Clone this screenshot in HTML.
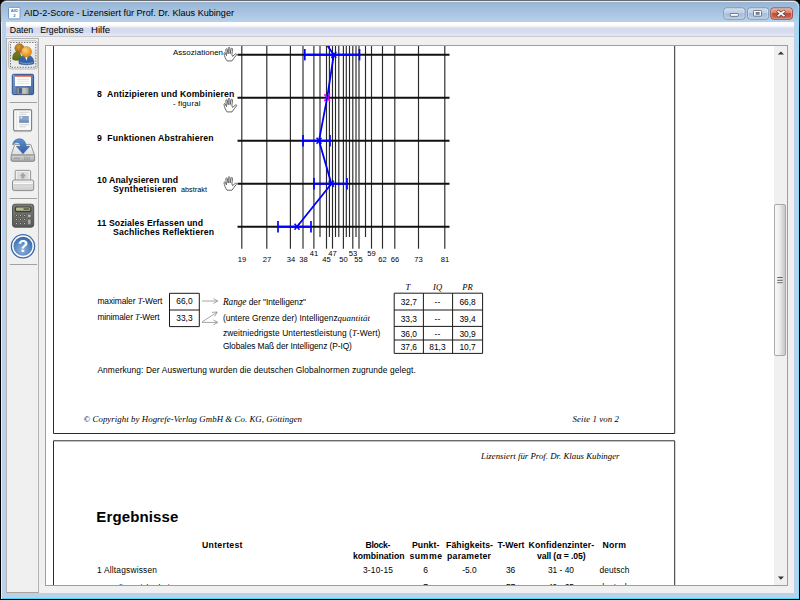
<!DOCTYPE html>
<html lang="de">
<head>
<meta charset="utf-8">
<title>AID-2-Score</title>
<style>
html,body{margin:0;padding:0;}
body{width:800px;height:600px;overflow:hidden;background:#000;position:relative;font-family:"Liberation Sans",sans-serif;}
.abs{position:absolute;}
#frame{left:1px;top:1px;width:798px;height:598px;background:#b9d1ea;border-radius:6px 6px 0 0;
  box-shadow:0 1px 0 0 #e4eefa inset, 1px 0 0 0 #e2eefa inset, 0 -1px 0 0 #4cd8f0 inset, -1px 0 0 0 #8fdcf8 inset;}
#frameglow{left:0;top:0;width:800px;height:600px;border-radius:7px 7px 0 0;background:linear-gradient(#6c6c6c,#202020 30px,#000 60px);}
#titlebar{left:1px;top:2px;width:797px;height:20px;border-radius:5px 5px 0 0;
  background:linear-gradient(#97b5d5,#a8c3e0 50%,#b6d1ea);}
#title{left:24px;top:5px;font-size:11.6px;color:#000;white-space:nowrap;letter-spacing:-0.1px;}
#client{left:6px;top:22px;width:788px;height:571px;background:#f0f0f0;}
#menubar{left:6px;top:22px;width:788px;height:15px;background:linear-gradient(#ffffff,#fdfdff 18%,#eef0f9 32%,#d6dbee 40%,#d6dbee 65%,#e4e8f6 92%,#c9c9cc 97%);}
.menu{top:24px;font-size:10.5px;color:#000;white-space:nowrap;}
#toolbar{left:6px;top:38px;width:33px;height:555px;border:1px solid #b4b4b4;border-bottom-color:#a8a29a;box-sizing:border-box;background:#f0f0f0;}
#view{left:45px;top:45px;width:743px;height:541px;border:1px solid #9a9ca8;box-sizing:border-box;background:#fff;overflow:hidden;}
#sbar{left:774px;top:46px;width:13px;height:539px;background:#f0f0f0;}
#thumb{left:774px;top:204px;width:12px;height:152px;border:1px solid #a8a8a8;border-radius:2px;box-sizing:border-box;
  background:linear-gradient(90deg,#f8f8f8,#f0f0f0 40%,#d0d0d4 85%,#c8c8cc);}
.wbtn{top:8px;height:11px;border:1px solid #6b84a4;border-radius:3px;box-sizing:border-box;
  background:linear-gradient(#c6d8ec,#b3cbe5 45%,#9dbbdc 50%,#b0cae6);box-shadow:0 0 0 1px rgba(255,255,255,.45) inset;}
#bclose{background:linear-gradient(#e3a698,#d4705c 45%,#c4432c 50%,#d0664e);border-color:#6a3a3a;}
</style>
</head>
<body>
<div class="abs" id="frameglow"></div>
<div class="abs" id="frame"></div>
<div class="abs" id="titlebar"></div>
<svg class="abs" style="left:0;top:0;z-index:5" width="800" height="40" font-family='"Liberation Sans",sans-serif'>
<text x="24" y="16.4" font-size="9.6" textLength="210" lengthAdjust="spacingAndGlyphs" fill="#000">AID-2-Score - Lizensiert für Prof. Dr. Klaus Kubinger</text>
<text x="9.8" y="32.6" font-size="9.4" textLength="23.4" lengthAdjust="spacingAndGlyphs">Daten</text>
<text x="40.2" y="32.6" font-size="9.4" textLength="43.4" lengthAdjust="spacingAndGlyphs">Ergebnisse</text>
<text x="91" y="32.6" font-size="9.4" textLength="19.2" lengthAdjust="spacingAndGlyphs">Hilfe</text>
</svg>
<div class="abs" id="client"></div>
<div class="abs" id="menubar"></div>
<div class="abs" id="toolbar"></div>
<div class="abs" id="view"></div>
<div class="abs" id="sbar"></div>
<div class="abs" id="thumb"></div>
<svg class="abs" id="doc" style="left:46px;top:46px" width="728" height="539" viewBox="46 46 728 539">
<style>.s{font-family:"Liberation Sans",sans-serif}.r{font-family:"Liberation Serif",serif}</style>
<path d="M53.5 46V433.5H674.7V46" fill="none" stroke="#2c2c2c" stroke-width="1"/>
<path d="M53.5 585V440.8H674.7V585" fill="none" stroke="#2c2c2c" stroke-width="1"/>
<line x1="241.8" y1="46" x2="241.8" y2="248.7" stroke="#2a2a2a" stroke-width="1.15"/>
<line x1="266.8" y1="46" x2="266.8" y2="248.7" stroke="#2a2a2a" stroke-width="1.15"/>
<line x1="290.4" y1="46" x2="290.4" y2="248.7" stroke="#2a2a2a" stroke-width="1.15"/>
<line x1="303" y1="46" x2="303" y2="248.7" stroke="#2a2a2a" stroke-width="1.15"/>
<line x1="313.9" y1="46" x2="313.9" y2="248.7" stroke="#2a2a2a" stroke-width="1.15"/>
<line x1="326.5" y1="46" x2="326.5" y2="248.7" stroke="#2a2a2a" stroke-width="1.15"/>
<line x1="332.5" y1="46" x2="332.5" y2="248.7" stroke="#2a2a2a" stroke-width="1.15"/>
<line x1="343.4" y1="46" x2="343.4" y2="248.7" stroke="#2a2a2a" stroke-width="1.15"/>
<line x1="352.8" y1="46" x2="352.8" y2="248.7" stroke="#2a2a2a" stroke-width="1.15"/>
<line x1="359" y1="46" x2="359" y2="248.7" stroke="#2a2a2a" stroke-width="1.15"/>
<line x1="371.5" y1="46" x2="371.5" y2="248.7" stroke="#2a2a2a" stroke-width="1.15"/>
<line x1="382.5" y1="46" x2="382.5" y2="248.7" stroke="#2a2a2a" stroke-width="1.15"/>
<line x1="394.8" y1="46" x2="394.8" y2="248.7" stroke="#2a2a2a" stroke-width="1.15"/>
<line x1="418.5" y1="46" x2="418.5" y2="248.7" stroke="#2a2a2a" stroke-width="1.15"/>
<line x1="444.8" y1="46" x2="444.8" y2="248.7" stroke="#2a2a2a" stroke-width="1.15"/>
<line x1="320" y1="46" x2="320" y2="237" stroke="#2a2a2a" stroke-width="1.15"/>
<line x1="329.4" y1="46" x2="329.4" y2="237" stroke="#2a2a2a" stroke-width="1.15"/>
<line x1="335.5" y1="46" x2="335.5" y2="237" stroke="#2a2a2a" stroke-width="1.15"/>
<line x1="338.8" y1="46" x2="338.8" y2="237" stroke="#2a2a2a" stroke-width="1.15"/>
<line x1="346.3" y1="46" x2="346.3" y2="237" stroke="#2a2a2a" stroke-width="1.15"/>
<line x1="349.5" y1="46" x2="349.5" y2="237" stroke="#2a2a2a" stroke-width="1.15"/>
<line x1="356" y1="46" x2="356" y2="237" stroke="#2a2a2a" stroke-width="1.15"/>
<line x1="365.5" y1="46" x2="365.5" y2="237" stroke="#2a2a2a" stroke-width="1.15"/>
<line x1="237.5" y1="54.7" x2="449.5" y2="54.7" stroke="#111" stroke-width="2"/>
<line x1="237.5" y1="97.7" x2="449.5" y2="97.7" stroke="#111" stroke-width="2"/>
<line x1="237.5" y1="140.7" x2="449.5" y2="140.7" stroke="#111" stroke-width="2"/>
<line x1="237.5" y1="183.7" x2="449.5" y2="183.7" stroke="#111" stroke-width="2"/>
<line x1="237.5" y1="226.8" x2="449.5" y2="226.8" stroke="#111" stroke-width="2"/>
<text class="s" x="242" y="262.35" font-size="7.6" text-anchor="middle">19</text>
<text class="s" x="267" y="262.35" font-size="7.6" text-anchor="middle">27</text>
<text class="s" x="291" y="262.35" font-size="7.6" text-anchor="middle">34</text>
<text class="s" x="303.5" y="262.35" font-size="7.6" text-anchor="middle">38</text>
<text class="s" x="326.5" y="262.35" font-size="7.6" text-anchor="middle">45</text>
<text class="s" x="343.5" y="262.35" font-size="7.6" text-anchor="middle">50</text>
<text class="s" x="358.5" y="262.35" font-size="7.6" text-anchor="middle">55</text>
<text class="s" x="382.5" y="262.35" font-size="7.6" text-anchor="middle">62</text>
<text class="s" x="395" y="262.35" font-size="7.6" text-anchor="middle">66</text>
<text class="s" x="418.5" y="262.35" font-size="7.6" text-anchor="middle">73</text>
<text class="s" x="445" y="262.35" font-size="7.6" text-anchor="middle">81</text>
<text class="s" x="314" y="255.55" font-size="7.6" text-anchor="middle">41</text>
<text class="s" x="332.5" y="255.55" font-size="7.6" text-anchor="middle">47</text>
<text class="s" x="353" y="255.55" font-size="7.6" text-anchor="middle">53</text>
<text class="s" x="371.5" y="255.55" font-size="7.6" text-anchor="middle">59</text>
<line x1="324.5" y1="94.34" x2="329.9" y2="101.06" stroke="#ff00ff" stroke-width="1.45"/>
<line x1="324.5" y1="101.06" x2="329.9" y2="94.34" stroke="#ff00ff" stroke-width="1.45"/>
<line x1="324.5" y1="94.34" x2="329.9" y2="101.06" stroke="#ff00ff" stroke-width="1.45"/>
<line x1="324.5" y1="101.06" x2="329.9" y2="94.34" stroke="#ff00ff" stroke-width="1.45"/>
<polyline fill="none" stroke="#0000ff" stroke-width="1.8" stroke-linejoin="round" points="327.6,46 333.8,54.7 327.2,97.7 319,140.7 331.4,183.7 297,226.8"/>
<line x1="304.8" y1="54.7" x2="359.5" y2="54.7" stroke="#0000ff" stroke-width="2"/>
<line x1="304.8" y1="49.0" x2="304.8" y2="60.400000000000006" stroke="#0000ff" stroke-width="1.7"/>
<line x1="359.5" y1="49.0" x2="359.5" y2="60.400000000000006" stroke="#0000ff" stroke-width="1.7"/>
<line x1="331.37" y1="51.676" x2="336.23" y2="57.724000000000004" stroke="#0000ff" stroke-width="1.45"/>
<line x1="331.37" y1="57.724000000000004" x2="336.23" y2="51.676" stroke="#0000ff" stroke-width="1.45"/>
<line x1="303" y1="140.7" x2="330" y2="140.7" stroke="#0000ff" stroke-width="2"/>
<line x1="303" y1="135.0" x2="303" y2="146.39999999999998" stroke="#0000ff" stroke-width="1.7"/>
<line x1="330" y1="135.0" x2="330" y2="146.39999999999998" stroke="#0000ff" stroke-width="1.7"/>
<line x1="316.57" y1="137.676" x2="321.43" y2="143.724" stroke="#0000ff" stroke-width="1.45"/>
<line x1="316.57" y1="143.724" x2="321.43" y2="137.676" stroke="#0000ff" stroke-width="1.45"/>
<line x1="314" y1="183.7" x2="347" y2="183.7" stroke="#0000ff" stroke-width="2"/>
<line x1="314" y1="178.0" x2="314" y2="189.39999999999998" stroke="#0000ff" stroke-width="1.7"/>
<line x1="347" y1="178.0" x2="347" y2="189.39999999999998" stroke="#0000ff" stroke-width="1.7"/>
<line x1="328.96999999999997" y1="180.676" x2="333.83" y2="186.724" stroke="#0000ff" stroke-width="1.45"/>
<line x1="328.96999999999997" y1="186.724" x2="333.83" y2="180.676" stroke="#0000ff" stroke-width="1.45"/>
<line x1="278" y1="226.8" x2="311" y2="226.8" stroke="#0000ff" stroke-width="2"/>
<line x1="278" y1="221.10000000000002" x2="278" y2="232.5" stroke="#0000ff" stroke-width="1.7"/>
<line x1="311" y1="221.10000000000002" x2="311" y2="232.5" stroke="#0000ff" stroke-width="1.7"/>
<line x1="294.57" y1="223.776" x2="299.43" y2="229.824" stroke="#0000ff" stroke-width="1.45"/>
<line x1="294.57" y1="229.824" x2="299.43" y2="223.776" stroke="#0000ff" stroke-width="1.45"/>
<text class="s" x="223" y="55.15" font-size="7.9" text-anchor="end" textLength="50" lengthAdjust="spacing">Assoziationen</text>
<text class="s" x="97" y="97.35" font-size="8.7" font-weight="bold" textLength="137.4" lengthAdjust="spacing" xml:space="preserve">8&#160;&#160;Antizipieren und Kombinieren</text>
<text class="s" x="173" y="106.35" font-size="7.8" textLength="27.4" lengthAdjust="spacing">- figural</text>
<text class="s" x="97" y="140.75" font-size="8.7" font-weight="bold" textLength="116.6" lengthAdjust="spacing">9&#160;&#160;Funktionen Abstrahieren</text>
<text class="s" x="97" y="183.35" font-size="8.7" font-weight="bold" textLength="81" lengthAdjust="spacing">10 Analysieren und</text>
<text class="s" x="113" y="192.35" font-size="8.7" font-weight="bold" textLength="63.4" lengthAdjust="spacing">Synthetisieren</text>
<text class="s" x="181" y="192.35" font-size="7.2" textLength="26" lengthAdjust="spacing">abstrakt</text>
<text class="s" x="97" y="226.35" font-size="8.7" font-weight="bold" textLength="106" lengthAdjust="spacing">11 Soziales Erfassen und</text>
<text class="s" x="113" y="235.35" font-size="8.7" font-weight="bold" textLength="101" lengthAdjust="spacing">Sachliches Reflektieren</text>
<g transform="translate(223.6,47)" fill="#fff" stroke="#555" stroke-width="0.9" stroke-linejoin="round" stroke-linecap="round"><path d="M3.2 13.6 C1.6 11.5 0.9 9 0.4 6.6 C0.2 5.6 1.4 5.3 1.8 6.2 L2.9 8.6 L2.2 2.6 C2.1 1.6 3.4 1.4 3.6 2.4 L4.6 6.8 L4.7 1.1 C4.7 0.1 6.1 0.1 6.2 1.1 L6.5 6.7 L7.5 1.8 C7.7 0.8 9 1.1 8.9 2.1 L8.3 7.6 L9 9.4 L11.7 7 C12.6 6.3 13.6 7.2 12.8 8.1 C11.2 9.9 10 11.6 8.6 13.6 Z"/></g>
<g transform="translate(223.6,98)" fill="#fff" stroke="#555" stroke-width="0.9" stroke-linejoin="round" stroke-linecap="round"><path d="M3.2 13.6 C1.6 11.5 0.9 9 0.4 6.6 C0.2 5.6 1.4 5.3 1.8 6.2 L2.9 8.6 L2.2 2.6 C2.1 1.6 3.4 1.4 3.6 2.4 L4.6 6.8 L4.7 1.1 C4.7 0.1 6.1 0.1 6.2 1.1 L6.5 6.7 L7.5 1.8 C7.7 0.8 9 1.1 8.9 2.1 L8.3 7.6 L9 9.4 L11.7 7 C12.6 6.3 13.6 7.2 12.8 8.1 C11.2 9.9 10 11.6 8.6 13.6 Z"/></g>
<g transform="translate(223.6,176.3)" fill="#fff" stroke="#555" stroke-width="0.9" stroke-linejoin="round" stroke-linecap="round"><path d="M3.2 13.6 C1.6 11.5 0.9 9 0.4 6.6 C0.2 5.6 1.4 5.3 1.8 6.2 L2.9 8.6 L2.2 2.6 C2.1 1.6 3.4 1.4 3.6 2.4 L4.6 6.8 L4.7 1.1 C4.7 0.1 6.1 0.1 6.2 1.1 L6.5 6.7 L7.5 1.8 C7.7 0.8 9 1.1 8.9 2.1 L8.3 7.6 L9 9.4 L11.7 7 C12.6 6.3 13.6 7.2 12.8 8.1 C11.2 9.9 10 11.6 8.6 13.6 Z"/></g>
<text class="s" x="97.4" y="304.35" font-size="8.4" textLength="65" lengthAdjust="spacing">maximaler <tspan class="r" font-style="italic" font-size="8.5">T</tspan>-Wert</text>
<text class="s" x="97.4" y="320.35" font-size="8.4" textLength="62.2" lengthAdjust="spacing">minimaler <tspan class="r" font-style="italic" font-size="8.5">T</tspan>-Wert</text>
<path d="M169.5 293.3H199.3V326.6H169.5ZM169.5 310H199.3" fill="none" stroke="#1a1a1a" stroke-width="1"/>
<text class="s" x="184.4" y="304.25" font-size="8.4" text-anchor="middle">66,0</text>
<text class="s" x="184.4" y="321.45" font-size="8.4" text-anchor="middle">33,3</text>
<g fill="none" stroke="#9a9a9a" stroke-width="0.9"><path d="M202 301H217.5M213.5 298.6L217.8 301L213.5 303.4"/><path d="M202 322.4H217.5M213.5 320L217.8 322.4L213.5 324.8"/><path d="M202 322L217 312.2M212 312.4L217.3 312L214.6 316.4"/></g>
<text class="s" x="222.9" y="304.65" font-size="8.4" textLength="83.2" lengthAdjust="spacing"><tspan class="r" font-style="italic" font-size="9.3">Range</tspan> der "Intelligenz"</text>
<text class="s" x="222.9" y="321.35" font-size="8.4" textLength="147" lengthAdjust="spacing">(untere Grenze der) Intelligenz<tspan class="r" font-style="italic" font-size="8.9">quantität</tspan></text>
<text class="s" x="222.9" y="335.95" font-size="8.4" textLength="157.5" lengthAdjust="spacing">zweitniedrigste Untertestleistung (<tspan class="r" font-style="italic" font-size="8.5">T</tspan>-Wert)</text>
<text class="s" x="222.9" y="348.95" font-size="8.4" textLength="129" lengthAdjust="spacing">Globales Maß der Intelligenz (P-IQ)</text>
<path d="M394.2 293.2H482.6V353.4H394.2ZM394.2 310H482.6M394.2 326.4H482.6M394.2 340H482.6M423.4 293.2V353.4M452.6 293.2V353.4" fill="none" stroke="#1a1a1a" stroke-width="1"/>
<text class="r" x="408" y="290.35" font-size="8.6" text-anchor="middle" font-style="italic">T</text>
<text class="r" x="437.6" y="290.35" font-size="8.6" text-anchor="middle" font-style="italic">IQ</text>
<text class="r" x="467.6" y="290.35" font-size="8.6" text-anchor="middle" font-style="italic">PR</text>
<text class="s" x="408.8" y="304.95" font-size="8.4" text-anchor="middle">32,7</text>
<text class="s" x="437.4" y="304.95" font-size="8.4" text-anchor="middle">--</text>
<text class="s" x="467.6" y="304.95" font-size="8.4" text-anchor="middle">66,8</text>
<text class="s" x="408.8" y="321.75" font-size="8.4" text-anchor="middle">33,3</text>
<text class="s" x="437.4" y="321.75" font-size="8.4" text-anchor="middle">--</text>
<text class="s" x="467.6" y="321.75" font-size="8.4" text-anchor="middle">39,4</text>
<text class="s" x="408.8" y="336.95" font-size="8.4" text-anchor="middle">36,0</text>
<text class="s" x="437.4" y="336.95" font-size="8.4" text-anchor="middle">--</text>
<text class="s" x="467.6" y="336.95" font-size="8.4" text-anchor="middle">30,9</text>
<text class="s" x="408.8" y="349.95" font-size="8.4" text-anchor="middle">37,6</text>
<text class="s" x="437.4" y="349.95" font-size="8.4" text-anchor="middle">81,3</text>
<text class="s" x="467.6" y="349.95" font-size="8.4" text-anchor="middle">10,7</text>
<text class="s" x="97.4" y="373.35" font-size="8.4" textLength="318.4" lengthAdjust="spacing">Anmerkung: Der Auswertung wurden die deutschen Globalnormen zugrunde gelegt.</text>
<text class="r" x="83.5" y="421.85" font-size="8.8" font-style="italic" textLength="218.5" lengthAdjust="spacing">© Copyright by Hogrefe-Verlag GmbH &amp; Co. KG, Göttingen</text>
<text class="r" x="572.6" y="421.85" font-size="8.8" font-style="italic" textLength="46.4" lengthAdjust="spacing">Seite 1 von 2</text>
<text class="r" x="481" y="458.95" font-size="8.8" font-style="italic" textLength="138.5" lengthAdjust="spacing">Lizensiert für Prof. Dr. Klaus Kubinger</text>
<text class="s" x="96.3" y="522.35" font-size="15" font-weight="bold" textLength="82" lengthAdjust="spacing">Ergebnisse</text>
<text class="s" x="202" y="547.85" font-size="8.7" font-weight="bold" textLength="40.5" lengthAdjust="spacing">Untertest</text>
<text class="s" x="365.5" y="547.95" font-size="8.7" font-weight="bold" textLength="25" lengthAdjust="spacing">Block-</text>
<text class="s" x="353" y="559.25" font-size="8.7" font-weight="bold" textLength="51.5" lengthAdjust="spacing">kombination</text>
<text class="s" x="412" y="547.95" font-size="8.7" font-weight="bold" textLength="27.4" lengthAdjust="spacing">Punkt-</text>
<text class="s" x="409.4" y="559.25" font-size="8.7" font-weight="bold" textLength="32.6" lengthAdjust="spacing">summe</text>
<text class="s" x="446" y="547.95" font-size="8.7" font-weight="bold" textLength="47" lengthAdjust="spacing">Fähigkeits-</text>
<text class="s" x="447" y="559.25" font-size="8.7" font-weight="bold" textLength="44" lengthAdjust="spacing">parameter</text>
<text class="s" x="497.5" y="547.95" font-size="8.7" font-weight="bold" textLength="27" lengthAdjust="spacing">T-Wert</text>
<text class="s" x="528.6" y="547.95" font-size="8.7" font-weight="bold" textLength="65.6" lengthAdjust="spacing">Konfidenzinter-</text>
<text class="s" x="537" y="559.25" font-size="8.7" font-weight="bold" textLength="48.6" lengthAdjust="spacing">vall (α = .05)</text>
<text class="s" x="602.5" y="547.95" font-size="8.7" font-weight="bold" textLength="23.5" lengthAdjust="spacing">Norm</text>
<text class="s" x="97" y="573.35" font-size="8.4" textLength="60" lengthAdjust="spacing">1 Alltagswissen</text>
<text class="s" x="363" y="572.95" font-size="8.4" textLength="30" lengthAdjust="spacing">3-10-15</text>
<text class="s" x="425.5" y="572.95" font-size="8.4" text-anchor="middle">6</text>
<text class="s" x="469.4" y="572.95" font-size="8.4" text-anchor="middle">-5.0</text>
<text class="s" x="510.6" y="572.95" font-size="8.4" text-anchor="middle">36</text>
<text class="s" x="561" y="572.95" font-size="8.4" text-anchor="middle">31 - 40</text>
<text class="s" x="599.5" y="572.95" font-size="8.4" textLength="30" lengthAdjust="spacing">deutsch</text>
<text class="s" x="97" y="590.55" font-size="8.4" textLength="75" lengthAdjust="spacing">2 Realitätssicherheit</text>
<text class="s" x="425.5" y="590.35" font-size="8.4" text-anchor="middle">7</text>
<text class="s" x="510.6" y="590.35" font-size="8.4" text-anchor="middle">57</text>
<text class="s" x="561" y="590.35" font-size="8.4" text-anchor="middle">49 - 65</text>
<text class="s" x="599.5" y="590.35" font-size="8.4" textLength="30" lengthAdjust="spacing">deutsch</text>
</svg>
<svg class="abs" id="icons" style="left:0;top:0;z-index:6" width="800" height="600" viewBox="0 0 800 600">
<defs>
<linearGradient id="gBtn" x1="0" y1="0" x2="0" y2="1"><stop offset="0" stop-color="#f6f6f6"/><stop offset="0.33" stop-color="#f0f0f0"/><stop offset="0.36" stop-color="#e6e6e6"/><stop offset="1" stop-color="#ebebeb"/></linearGradient>
<radialGradient id="gHead1" cx="0.4" cy="0.35" r="0.7"><stop offset="0" stop-color="#d99a3a"/><stop offset="1" stop-color="#9a5f10"/></radialGradient>
<radialGradient id="gHead2" cx="0.4" cy="0.35" r="0.7"><stop offset="0" stop-color="#fbd08a"/><stop offset="0.6" stop-color="#f0a332"/><stop offset="1" stop-color="#d98718"/></radialGradient>
<linearGradient id="gGreen" x1="0" y1="0" x2="0" y2="1"><stop offset="0" stop-color="#6f8222"/><stop offset="1" stop-color="#5a6a18"/></linearGradient>
<linearGradient id="gBlueB" x1="0" y1="0" x2="0" y2="1"><stop offset="0" stop-color="#3c6db0"/><stop offset="1" stop-color="#2d5a9a"/></linearGradient>
<linearGradient id="gFloppy" x1="0" y1="0" x2="1" y2="1"><stop offset="0" stop-color="#7ba0d8"/><stop offset="1" stop-color="#46679f"/></linearGradient>
<linearGradient id="gShut" x1="0" y1="0" x2="1" y2="0"><stop offset="0" stop-color="#8a8a86"/><stop offset="0.6" stop-color="#c8c8c4"/><stop offset="1" stop-color="#9a9a96"/></linearGradient>
<linearGradient id="gDrive" x1="0" y1="0" x2="0" y2="1"><stop offset="0" stop-color="#d6d6d6"/><stop offset="1" stop-color="#a9a9a9"/></linearGradient>
<linearGradient id="gTop" x1="0" y1="0" x2="0" y2="1"><stop offset="0" stop-color="#f4f4f4"/><stop offset="1" stop-color="#dedede"/></linearGradient>
<linearGradient id="gArrow" x1="0" y1="0" x2="0" y2="1"><stop offset="0" stop-color="#5d8fd0"/><stop offset="1" stop-color="#2f5fa5"/></linearGradient>
<linearGradient id="gCalc" x1="0" y1="0" x2="0" y2="1"><stop offset="0" stop-color="#7c7e7a"/><stop offset="1" stop-color="#555753"/></linearGradient>
<radialGradient id="gHelp" cx="0.45" cy="0.7" r="0.75"><stop offset="0" stop-color="#8fb3dc"/><stop offset="0.6" stop-color="#5483bd"/><stop offset="1" stop-color="#2f5e9c"/></radialGradient>
<linearGradient id="gPr" x1="0" y1="0" x2="0" y2="1"><stop offset="0" stop-color="#f2f2f2"/><stop offset="1" stop-color="#c9c9c9"/></linearGradient>
</defs>
<!-- title icon -->
<rect x="8.5" y="7.3" width="11.6" height="11.6" rx="1" fill="#fff" stroke="#6f95c6" stroke-width="1"/>
<text x="14.3" y="12.3" font-family='"Liberation Sans",sans-serif' font-size="4.2" font-weight="bold" fill="#4a78b8" text-anchor="middle">AID</text>
<text x="14.3" y="17.3" font-family='"Liberation Sans",sans-serif' font-size="4.2" font-weight="bold" fill="#4a78b8" text-anchor="middle">2</text>
<!-- window buttons -->
<linearGradient id="gWb" x1="0" y1="0" x2="0" y2="1"><stop offset="0" stop-color="#cddcee"/><stop offset="0.46" stop-color="#bccfe6"/><stop offset="0.5" stop-color="#a4bedc"/><stop offset="1" stop-color="#b4cbe6"/></linearGradient>
<linearGradient id="gWc" x1="0" y1="0" x2="0" y2="1"><stop offset="0" stop-color="#eab0a2"/><stop offset="0.46" stop-color="#dc7a66"/><stop offset="0.5" stop-color="#c6452e"/><stop offset="1" stop-color="#d46a52"/></linearGradient>
<g stroke-width="0.9">
<rect x="723.8" y="7.9" width="21.2" height="11.3" rx="2.6" fill="url(#gWb)" stroke="#7d90aa"/>
<rect x="747.6" y="7.9" width="21" height="11.3" rx="2.6" fill="url(#gWb)" stroke="#7d90aa"/>
<rect x="770.8" y="7.9" width="21.6" height="11.3" rx="2.6" fill="url(#gWc)" stroke="#7c4c50"/>
</g>
<g fill="none" stroke="#fff" stroke-opacity="0.5" stroke-width="0.7">
<rect x="724.7" y="8.8" width="19.4" height="9.5" rx="1.8"/><rect x="748.5" y="8.800" width="19.2" height="9.5" rx="1.8"/><rect x="771.7" y="8.800" width="19.8" height="9.500" rx="1.8"/>
</g>
<rect x="730.3" y="13.5" width="8" height="2.8" rx="0.6" fill="#fff" stroke="#555f6e" stroke-width="0.8"/>
<rect x="753.5" y="10.5" width="8" height="5.6" rx="0.7" fill="#fff" stroke="#555f6e" stroke-width="0.8"/>
<rect x="756" y="12.3" width="3.2" height="2" fill="#6f8cb4" stroke="#555f6e" stroke-width="0.6"/>
<path d="M778.4 11.6L783.8 15.6M783.8 11.6L778.4 15.6" stroke="#5a4444" stroke-width="3.1" stroke-linecap="square"/>
<path d="M778.4 11.6L783.8 15.6M783.8 11.6L778.4 15.6" stroke="#fff" stroke-width="1.8" stroke-linecap="square"/>
<!-- scroll arrows and grip -->
<path d="M777.8 54.6L780.9 51.4L784 54.6Z" fill="#333"/>
<path d="M777.9 576.6L780.9 579.7L783.9 576.6Z" fill="#333"/>
<g stroke="#555" stroke-width="1"><path d="M777.2 277.6H782.6M777.2 280.3H782.6M777.2 282.8H782.6"/></g>
<g stroke="#fff" stroke-width="0.6" opacity="0.8"><path d="M777.2 278.6H782.6M777.2 281.3H782.6M777.2 283.8H782.6"/></g>

<!-- toolbar: button 1 -->
<rect x="8.6" y="40.8" width="29" height="28.2" rx="2.5" fill="url(#gBtn)" stroke="#b4b4b4" stroke-width="0.9"/>
<rect x="10.5" y="42.5" width="25.3" height="24.8" fill="none" stroke="#333" stroke-width="0.65" stroke-dasharray="1.4 1.3"/>
<!-- users -->
<path d="M12.700 59.300C12.400 55 14.400 51.800 17 51.800C19.600 51.800 21.400 55 21.100 59.300C19.500 60.700 14.300 60.700 12.700 59.300Z" fill="url(#gGreen)" stroke="#4e5c14" stroke-width="0.600"/>
<circle cx="19.4" cy="48.2" r="4.5" fill="url(#gHead1)" stroke="#8a5410" stroke-width="0.5"/>
<path d="M19 63.6C18.6 58.6 21.4 55 26.4 55C31.4 55 34.2 58.6 33.8 63.6C31.5 65.1 21.3 65.1 19 63.600Z" fill="url(#gBlueB)" stroke="#274f88" stroke-width="0.6"/>
<path d="M25 56L26.4 60.8L27.800 56Z" fill="#fff"/>
<path d="M20.300 62.600C22.500 63.800 30.300 63.800 32.500 62.600" fill="none" stroke="#7ea4d6" stroke-width="0.900" stroke-linecap="round"/>
<circle cx="26.4" cy="51.7" r="5.2" fill="url(#gHead2)" stroke="#c27a14" stroke-width="0.5"/>
<!-- floppy -->
<rect x="12.3" y="74.3" width="21.3" height="20.3" rx="1.3" fill="url(#gFloppy)" stroke="#2f4f85" stroke-width="1"/>
<rect x="15" y="75" width="16" height="11" fill="#fff"/>
<rect x="15" y="75" width="16" height="1.7" fill="#e8503a"/>
<path d="M17 79.300H29M17 81.300H29M17 83.600H29" stroke="#d4d4d4" stroke-width="0.7"/>
<rect x="17" y="87.200" width="12" height="7" fill="url(#gShut)" stroke="#5a5a58" stroke-width="0.6"/>
<rect x="19.200" y="88.600" width="2.5" height="4.6" fill="#3a66ad" stroke="#2b4a80" stroke-width="0.5"/>
<!-- separators -->
<path d="M9.700 102.500H37M9.700 198.500H37M9.700 264.500H37" stroke="#a2a2a2" stroke-width="1"/>
<!-- document (disabled) -->
<rect x="13.600" y="109.600" width="18" height="21.200" rx="1.500" fill="#f8f8f8" stroke="#7c7c7c" stroke-width="1.100"/>
<path d="M13.800 131.600H31.400" stroke="#b0b0b0" stroke-width="0.800"/>
<path d="M16.500 111.500V129.500" stroke="#e2e2e2" stroke-width="0.800"/>
<path d="M19.200 112.300H28.800M19.200 114.300H25.800M19.200 124.800H28.800M19.200 126.800H25.800" stroke="#cfcfcf" stroke-width="0.900"/>
<rect x="19.200" y="116" width="9.600" height="6.700" fill="#86a4ca"/>
<rect x="19.200" y="120.300" width="9.600" height="2.400" fill="#7690b8"/>
<circle cx="21.300" cy="117.500" r="1.100" fill="#eef2c8"/>
<!-- download -->
<path d="M14.700 144.400H30.700L34.600 155.200H11.100Z" fill="url(#gTop)" stroke="#8c8c8c" stroke-width="0.900" stroke-linejoin="round"/>
<rect x="11.100" y="155" width="23.500" height="6.300" rx="1.200" fill="url(#gDrive)" stroke="#7d7d7d" stroke-width="0.900"/>
<path d="M14 158.300H20M24.800 156.500V160M27 156.500V160M29.200 156.500V160" stroke="#8e8e8e" stroke-width="0.800"/>
<path d="M12.800 145C12.800 140.800 16.500 138.600 19.800 138.800C23.500 139 26 141.800 26 146.300H29.700L23 153.800L16.300 146.300H20.500C20.500 143.600 18.800 142.400 16.800 142.600C14.800 142.800 13.600 143.800 12.800 145Z" fill="url(#gArrow)" stroke="#2c5796" stroke-width="0.500" stroke-linejoin="round"/>
<!-- printer (disabled) -->
<rect x="15.200" y="170.400" width="15.400" height="11.500" rx="0.800" fill="#f0f0f0" stroke="#8a8a8a" stroke-width="0.900"/>
<rect x="17" y="172" width="11.800" height="8" fill="#dcdcdc"/>
<path d="M22.900 172.600L26.200 176.200H24.400V178.600H21.400V176.200H19.600Z" fill="#a4a4a4"/>
<rect x="12.500" y="180" width="21.200" height="10.600" rx="1.800" fill="url(#gPr)" stroke="#858585" stroke-width="0.900"/>
<path d="M13.600 183.600H32.600" stroke="#fafafa" stroke-width="1.200"/>
<path d="M13.600 184.800H32.600" stroke="#b4b4b4" stroke-width="0.600"/>
<!-- calculator -->
<rect x="12.500" y="204.200" width="21.200" height="23" rx="2.400" fill="url(#gCalc)" stroke="#4a4c48" stroke-width="0.900"/>
<rect x="14.800" y="206.400" width="16.600" height="5.800" rx="1.600" fill="#3c3e3a"/>
<rect x="16" y="207.500" width="14.200" height="3.200" rx="0.800" fill="#b9bd95"/>
<rect x="23.500" y="208.200" width="5.800" height="1.700" fill="#5e6148"/>
<g fill="#3f413d" stroke="#8a8c88" stroke-width="0.400">
<rect x="15.100" y="214.100" width="2.900" height="2.900"/><rect x="19.100" y="214.100" width="2.900" height="2.900"/><rect x="23.100" y="214.100" width="2.900" height="2.900"/>
<rect x="15.100" y="218" width="2.900" height="2.900"/><rect x="19.100" y="218" width="2.900" height="2.900"/><rect x="23.100" y="218" width="2.900" height="2.900"/>
<rect x="15.100" y="221.900" width="2.900" height="2.900"/><rect x="19.100" y="221.900" width="2.900" height="2.900"/><rect x="23.100" y="221.900" width="2.900" height="2.900"/>
</g>
<g fill="#e4e4e0"><circle cx="16.550" cy="215.550" r="0.550"/><circle cx="20.550" cy="215.550" r="0.550"/><circle cx="24.550" cy="215.550" r="0.550"/><circle cx="16.550" cy="219.450" r="0.550"/><circle cx="20.550" cy="219.450" r="0.550"/><circle cx="24.550" cy="219.450" r="0.550"/><circle cx="16.550" cy="223.350" r="0.550"/><circle cx="20.550" cy="223.350" r="0.550"/><circle cx="24.550" cy="223.350" r="0.550"/></g>
<rect x="27.700" y="214.600" width="3.200" height="2.600" rx="0.500" fill="#c4c4c0" stroke="#444" stroke-width="0.400"/>
<rect x="27.700" y="219.200" width="3.200" height="5.200" rx="0.500" fill="#aeaeaa" stroke="#444" stroke-width="0.400"/>
<!-- help -->
<circle cx="23" cy="246.300" r="11.600" fill="#fff" stroke="#3a68a6" stroke-width="1.300"/>
<circle cx="23" cy="246.300" r="9.500" fill="url(#gHelp)"/>
<text x="23" y="252.300" font-family='"Liberation Sans",sans-serif' font-size="16.500" font-weight="bold" fill="#fff" text-anchor="middle">?</text>
</svg>

</body>
</html>
